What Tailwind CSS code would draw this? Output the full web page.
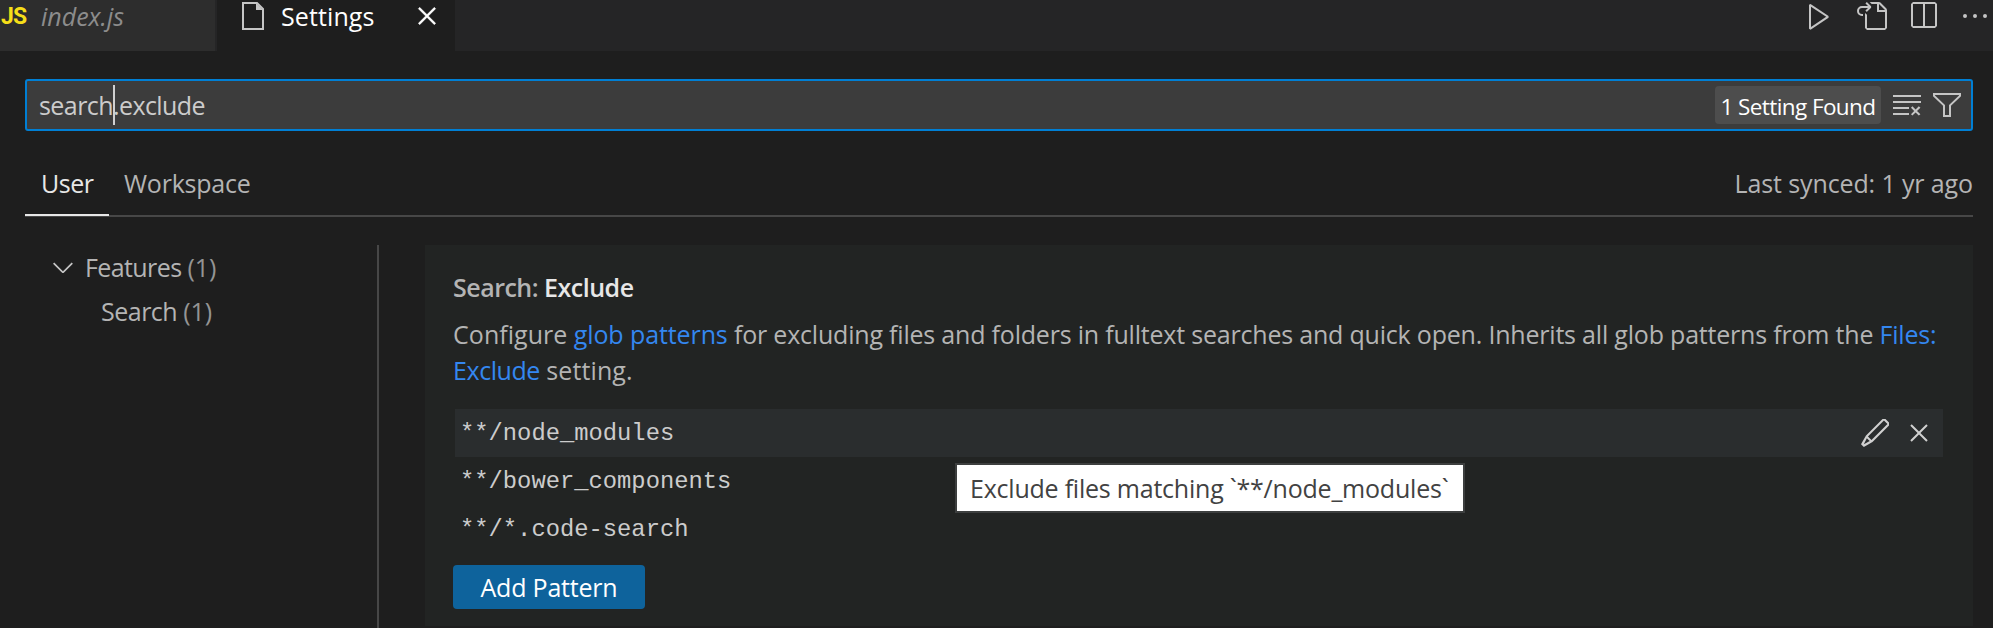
<!DOCTYPE html>
<html lang="en">
<head>
<meta charset="utf-8">
<title>Settings</title>
<script src="https://cdn.jsdelivr.net/npm/@tailwindcss/browser@4"></script>
</head>
<body class="flex h-[628px] w-[1993px] flex-col overflow-hidden bg-[#1e1e1e] font-['Open_Sans',sans-serif] text-[25px] text-[#b4b4b4] whitespace-nowrap">
  <header class="flex h-[51px] shrink-0 bg-[#252526]">
    <div class="flex h-full w-[215px] bg-[#2d2d2d] pl-px">
      <span class="w-10 font-[Roboto,sans-serif] text-[23px] leading-[33px] font-bold tracking-[-0.8px] text-[#f5de19]">JS</span>
      <span class="leading-[33px] text-[#8c8c8c] italic">index.js</span>
    </div>
    <div class="ml-0.5 flex h-full w-[238px] bg-[#1e1e1e] pl-[25px]">
      <svg class="mt-0.5 h-7 w-[22px] shrink-0" viewBox="0 0 22 28" fill="none" stroke="#c5c5c5" stroke-width="2"><path d="M1 1h14l6 6v20H1z"/><path d="M14 1v7h7z" fill="#c5c5c5" stroke="none"/></svg>
      <span class="ml-[17px] w-[130px] leading-[33px] tracking-[0.1px] text-white">Settings</span>
      <svg class="size-8 shrink-0" viewBox="0 0 16 16" fill="#fff" stroke="#fff" stroke-width="0.2"><path d="M8 8.707l3.646 3.647.708-.707L8.707 8l3.647-3.646-.707-.708L8 7.293 4.354 3.646l-.707.708L7.293 8l-3.646 3.646.707.708L8 8.707z"/></svg>
    </div>
    <div class="ml-auto flex gap-5 pr-0.5 text-[#c5c5c5]">
      <svg class="size-8" viewBox="0 0 16 16" fill="currentColor"><path d="M3.78 2L3 2.41v12l.78.42 9-6V8l-9-6zM4 13.48V3.35l7.6 5.07L4 13.48z"/></svg>
      <svg class="size-8" viewBox="0 0 16 16" fill="currentColor"><path fill-rule="evenodd" d="M6 5.914l2.06-2.06v-.708L5.915 1l-.707.707.043.043.25.25 1 1h-3a2.5 2.5 0 0 0 0 5H4V7h-.5a1.5 1.5 0 1 1 0-3h3L5.207 5.293 5.914 6 6 5.914zM11 2H8.328l-1-1H12l.71.29 3 3L16 5v9l-1 1H6l-1-1V6.5l1 .847V14h9V6h-4V2zm1 0v3h3l-3-3z"/></svg>
      <svg class="size-8" viewBox="0 0 16 16" fill="currentColor"><path d="M14 1H3L2 2v11l1 1h11l1-1V2l-1-1zM8 13H3V2h5v11zm6 0H9V2h5v11z"/></svg>
      <svg class="size-8" viewBox="0 0 16 16" fill="currentColor"><path d="M4 8a1 1 0 1 1-2 0 1 1 0 0 1 2 0zm5 0a1 1 0 1 1-2 0 1 1 0 0 1 2 0zm5 0a1 1 0 1 1-2 0 1 1 0 0 1 2 0z"/></svg>
    </div>
  </header>

  <main class="flex min-h-0 flex-1 flex-col pt-7 pr-5 pl-[25px]">
    <div class="flex h-[52px] shrink-0 items-center rounded-[3px] border-2 border-[#007fd4] bg-[#3c3c3c] pr-2 pl-3">
      <div class="flex items-center leading-10 text-[#cccccc]"><span class="tracking-[-0.56px]">search</span><span class="-mr-0.5 h-10 w-0.5 bg-[#d0d0d0]"></span><span class="tracking-[-0.6px]">.exclude</span></div>
      <div class="ml-auto flex h-[38px] w-[166px] items-center justify-center rounded-[4px] bg-[#4d4d4d] pt-[3px] text-[22.5px] tracking-[-0.59px] text-white">1 Setting Found</div>
      <svg class="ml-2.5 size-8 text-[#c5c5c5]" viewBox="0 0 16 16" fill="currentColor"><path d="M10 12.6l.7.7 1.6-1.6 1.6 1.6.8-.7L13 11l1.7-1.6-.8-.8-1.6 1.7-1.6-1.7-.7.8 1.6 1.6-1.6 1.6zM1 4h14V3H1v1zm0 3h14V6H1v1zm8 2.5V9H1v1h8v-.5zM9 13v-1H1v1h8z"/></svg>
      <svg class="ml-2 size-8 text-[#c5c5c5]" viewBox="0 0 16 16" fill="currentColor"><path d="M15 2v1.67l-5 4.759V14H6V8.429l-5-4.76V2h14zM7 8v5h2V8l5-4.76V3H2v.24L7 8z"/></svg>
    </div>

    <div class="mt-[31px] flex h-[55px] shrink-0 justify-between bg-[linear-gradient(#474747,#474747)] bg-[length:100%_2px] bg-bottom bg-no-repeat">
      <div class="flex leading-[43px]">
        <div class="h-[54px] w-[84px] border-b-2 border-[#e7e7e7] pl-4 tracking-[-0.48px] text-[#e7e7e7]">User</div>
        <div class="pl-[15px] tracking-[-0.23px]">Workspace</div>
      </div>
      <div class="leading-[43px] tracking-[-0.12px]">Last synced: 1 yr ago</div>
    </div>

    <div class="mt-7 flex min-h-0 flex-1">
      <nav class="w-[354px] shrink-0 border-r-2 border-[#474747] pl-[22px] leading-[44px] text-[#b4b4b4]">
        <div class="flex h-11 items-center">
          <svg class="size-8" viewBox="0 0 16 16" fill="#c5c5c5"><path d="M7.976 10.072l4.357-4.357.62.618L8.284 11h-.618L3 6.333l.619-.618 4.357 4.357z"/></svg>
          <span class="ml-1.5 tracking-[-0.6px]">Features</span><span class="ml-1.5 text-[#949494]">(1)</span>
        </div>
        <div class="flex h-11 items-center pl-[54px]"><span class="tracking-[-0.5px]">Search</span><span class="ml-1.5 text-[#949494]">(1)</span></div>
      </nav>

      <section class="mb-[2px] ml-[46px] min-w-0 flex-1 bg-[#222423] pr-[30px] pl-7">
        <h2 class="pt-6 text-[25px] leading-[36px] font-semibold tracking-[-0.5px]">Search: <span class="text-[#e7e7e7]">Exclude</span></h2>
        <p class="mt-[11px] leading-9 tracking-[-0.2px]"><span class="tracking-[0.05px]">Configure</span> <span class="tracking-[-0.1px] text-[#3487f0]">glob patterns</span> for excluding files and folders in fulltext searches and quick open. Inherits all glob patterns from the <span class="text-[#3487f0]">Files:</span><br><span class="tracking-[-0.42px] text-[#3487f0]">Exclude</span> <span class="tracking-[0.1px]">setting.</span></p>
        <ul class="mt-[21px] ml-0.5 font-['Liberation_Mono',monospace] text-[23.8px] leading-[50px] text-[#cccccc]">
          <li class="relative flex h-12 bg-[#2a2d2e] pl-[5px]">
            <span>**/node_modules</span>
            <svg class="mt-2 ml-auto size-8" viewBox="0 0 16 16" fill="#d0d0d0"><path d="M13.23 1h-1.46L3.52 9.25l-.16.22L1 13.59 2.41 15l4.12-2.36.22-.16L15 4.23V2.77L13.23 1zM2.41 13.59l1.51-3 1.45 1.45-2.96 1.55zm3.83-2.06L4.47 9.76l8-8 1.77 1.77-8 8z"/></svg>
            <svg class="mt-2 mr-2 ml-3 size-8" viewBox="0 0 16 16" fill="#d0d0d0"><path d="M8 8.707l3.646 3.647.708-.707L8.707 8l3.647-3.646-.707-.708L8 7.293 4.354 3.646l-.707.708L7.293 8l-3.646 3.646.707.708L8 8.707z"/></svg>
            <div class="absolute top-[54px] left-[500px] z-10 h-[50px] w-[510px] border-2 border-[#3d3f3f] bg-white pl-[13px] font-['Open_Sans',sans-serif] text-[25px] leading-[46px] tracking-[-0.22px] text-[#424242]">Exclude files matching `**/node_modules`</div>
          </li>
          <li class="h-12 pl-[5px]">**/bower_components</li>
          <li class="h-12 pl-[5px]">**/*.code-search</li>
        </ul>
        <button class="mt-3 flex h-11 w-48 items-center justify-center rounded-[4px] bg-[#0e639c] pt-px tracking-[-0.2px] text-white">Add Pattern</button>
      </section>
    </div>
  </main>
</body>
</html>
